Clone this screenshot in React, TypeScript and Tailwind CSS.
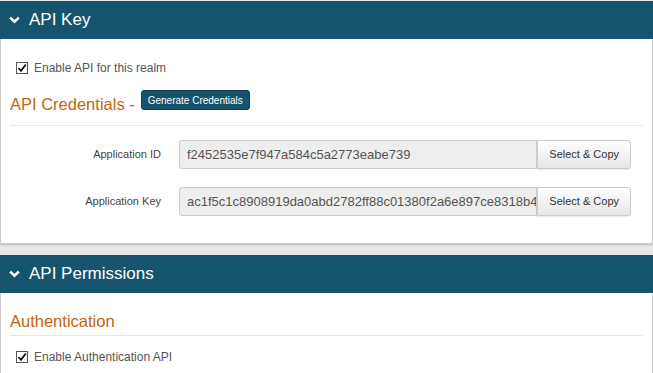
import React from "react";

function Chevron() {
  return (
    <svg width="11" height="8" viewBox="0 0 11 8" className="shrink-0">
      <path d="M1.2 1.6 L5.5 5.8 L9.8 1.6" fill="none" stroke="#fff" strokeWidth="2.6" />
    </svg>
  );
}

function Header({ title }: { title: string }) {
  return (
    <div className="flex h-[38px] items-center gap-[9px] bg-[#15536e] pl-[9px] text-white">
      <Chevron />
      <span className="text-[17px]">{title}</span>
    </div>
  );
}

function Check({ label }: { label: string }) {
  return (
    <label className="flex items-center gap-[6px] text-[12px] text-[#555]">
      <span className="flex h-[12px] w-[12px] items-center justify-center border border-[#555] bg-white">
        <svg width="10" height="10" viewBox="0 0 10 10">
          <path d="M1.5 5 L4 7.8 L8.8 1.5" fill="none" stroke="#111" strokeWidth="1.8" />
        </svg>
      </span>
      {label}
    </label>
  );
}

function KeyRow({ label, value }: { label: string; value: string }) {
  return (
    <div className="flex items-center">
      <div className="w-[151px] text-right text-[11px] text-[#444]">{label}</div>
      <div className="ml-[18px] flex h-[29px] w-[452px]">
        <div className="flex min-w-0 flex-1 items-center overflow-hidden whitespace-nowrap rounded-l-[3px] border border-[#ccc] bg-[#eee] pl-[7px] text-[13px] text-[#555]">
          {value}
        </div>
        <button className="shrink-0 rounded-r-[3px] border border-[#ccc] bg-gradient-to-b from-white to-[#e6e6e6] px-[11px] text-[11px] text-[#333] shadow-[0_1px_1px_rgba(0,0,0,0.08)]">
          Select &amp; Copy
        </button>
      </div>
    </div>
  );
}

export default function App() {
  return (
    <div className="h-[373px] w-[653px] overflow-hidden bg-[#e8e8e8] pt-[1px] font-['Liberation_Sans',Arial,sans-serif]">
      <div className="shadow-[0_1px_2px_rgba(0,0,0,0.2)]">
        <Header title="API Key" />
        <div className="h-[205px] border-x border-b border-x-[#ccc] border-b-[#c8c8c8] bg-white px-[9px]">
          <div className="pl-[6px] pt-[20px]">
            <Check label="Enable API for this realm" />
          </div>
          <div className="mt-[18px] flex h-[23px] items-center pb-[6px]">
            <span className="text-[16.5px] leading-[22px] text-[#c0650f]">API Credentials -</span>
            <button className="ml-[6px] mt-[-7px] h-[20px] rounded-[3px] border border-[#0f3e53] bg-[#15536e] px-[6px] text-[10px] text-white">
              Generate Credentials
            </button>
          </div>
          <div className="mt-[7px] border-t border-[#e8e8e8]" />
          <div className="mt-[14px] flex flex-col gap-[18px]">
            <KeyRow label="Application ID" value="f2452535e7f947a584c5a2773eabe739" />
            <KeyRow label="Application Key" value="ac1f5c1c8908919da0abd2782ff88c01380f2a6e897ce8318b4e" />
          </div>
        </div>
      </div>
      <div className="mt-[11px]">
        <Header title="API Permissions" />
        <div className="h-[90px] border-x border-[#ccc] bg-white px-[9px]">
          <div className="pt-[17px] text-[16.5px] leading-[22px] text-[#c0650f]">Authentication</div>
          <div className="mt-[3px] border-t border-[#e8e8e8]" />
          <div className="pl-[6px] pt-[12px]">
            <Check label="Enable Authentication API" />
          </div>
        </div>
      </div>
    </div>
  );
}
